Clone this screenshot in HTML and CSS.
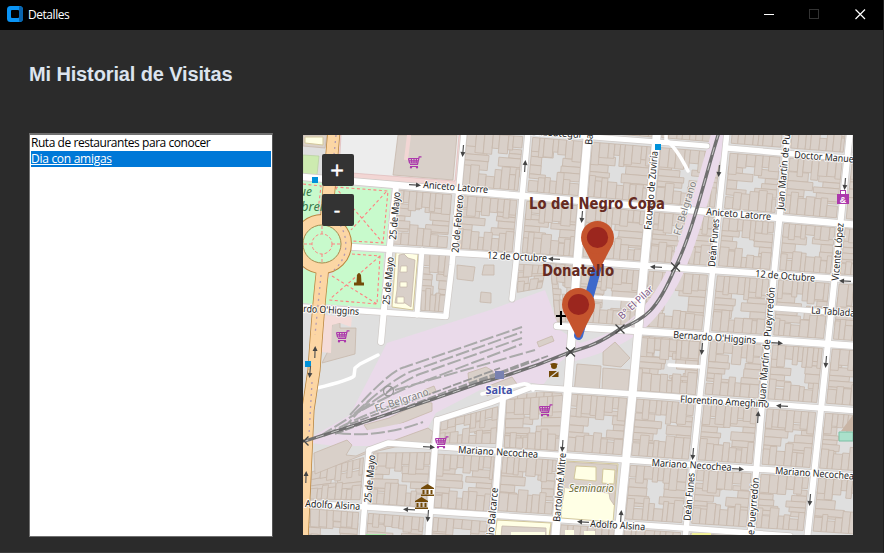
FILE: index.html
```html
<!DOCTYPE html>
<html lang="es">
<head>
<meta charset="utf-8">
<title>Detalles</title>
<link rel="stylesheet" href="styles.css">
</head>
<body>
<div class="window">
  <header class="titlebar">
    <svg class="logo" width="16" height="16" viewBox="0 0 16 16"><rect width="16" height="16" rx="3.5" fill="#0a94f5"/><path d="M12 0.2Q16 .5 16 3.500V12.500Q16 15.500 12 15.800Z" fill="#0a64ae"/><rect x="4" y="4" width="8" height="8" rx="1" fill="#000"/></svg>
    <span class="caption">Detalles</span>
    <div class="controls">
      <svg width="46" height="30"><path d="M18 14.500h10" stroke="#fff"/></svg>
      <svg width="46" height="30"><rect x="17.500" y="9.500" width="9" height="9" fill="none" stroke="#333"/></svg>
      <svg width="46" height="30"><path d="M17.500 9.500l9.500 9.500m0-9.500l-9.500 9.500" stroke="#fff" stroke-width="1.200"/></svg>
    </div>
  </header>
  <main class="content">
    <h1 class="heading">Mi Historial de Visitas</h1>
    <div class="panes">
      <ul class="list">
        <li class="item"><span class="t1">Ruta de restaurantes para conocer</span></li>
        <li class="item selected"><span class="t2">Dia con amigas</span></li>
      </ul>
      <div class="map">
        <svg width="550" height="400" viewBox="303 135 550 400">
          <defs>
            <g id="cart" fill="none" stroke="#ac39ac" stroke-width="1.200"><path d="M13.500 .8h-2.300L9.500 8.500H2M.5 2.500h10.200M.5 2.500l1 4.500h8.200M1 4.800h9.500M3.300 2.500l.5 4.500M6 2.500v4.500M8.500 2.500l-.4 4.500M2 10.500h8"/><circle cx="3" cy="11.300" r=".6"/><circle cx="9" cy="11.300" r=".6"/></g>
            <g id="arrow"><path d="M-6 0H3" stroke="#555" stroke-width="1.200"/><path d="M1-2.500L6 0L1 2.500Z" fill="#444"/></g>
            <g id="museum" fill="#734a08"><path d="M0 4L6.500 0L13 4V5H0ZM1.500 6h2v4h-2zM5.500 6h2v4h-2zM9.500 6h2v4h-2zM0 10.500h13V12H0z"/></g>
            <g id="cross" stroke="#444" stroke-width="1.300"><path d="M-4.500-4.500l9 9m0-9l-9 9"/></g>
            <g id="pin"><path d="M-15.500-26L-1.500 1H1.500L15.500-26Z" fill="#c5542d"/><circle cy="-32" r="16.500" fill="#c5542d"/><circle cy="-32" r="10.600" fill="#9b261e"/></g>
          </defs>
          <rect x="303" y="135" width="550" height="400" fill="#dfdfdf"/>
          <g id="blocks" class="lot"></g>

          <!-- shopping centre, park and avenue surroundings -->
          <path d="M335 135H464L456 190L330 177Z" fill="#ededed"/>
          <path d="M341 135l-2 37 116 9 4-46h5l-4 53-124-9 3-44z" fill="#f2d6d4" stroke="#dcb4b4" stroke-width=".6"/>
          <path class="lot" d="M398 135L393 175L453 180L457 135Z"/>
          <path d="M409 135l-3 25" stroke="#f2d6d4" stroke-width="4"/>
          <path d="M303 155l16 1-2 19-14-1z" fill="#cdebb0" stroke="#b8cfa0" stroke-width=".7"/>
          <path class="lot" d="M303 135h24l-2 13-22-2z"/><path d="M305 137h18v8l-18-2z" fill="#ffffe5" stroke="#d3c79b"/>
          <g fill="#c8facc" stroke="#ff8080" stroke-width="1.100" stroke-dasharray="3 2.500">
            <path d="M303 181l20 2-4 30-16 8z" stroke="none"/>
            <path d="M334 185l57 4-5 57-38-2-5-18-12-15z" stroke="none"/>
            <path d="M352 251l32 2-3 55-58-4 3-23z" stroke="none"/>
            <path d="M303 269l13 3-3 32-10-1z" stroke="none"/>
            <path d="M335 187l53 4-5 52-31-2M335 187l48 56M386 192l-35 38M352 254l28 2-3 48-48-4M332 276l45 28M380 256l-50 43M303 184l18 2-3 25" fill="none"/>
          </g>
          <g class="lot">
            <path d="M332 324l8-1v5h16l-1 26-33 9 7-14z"/>
            <path d="M457 265l18 2-2 14-16-2zM484 265h10v10h-12zM481 292l10 1v10l-11-1z"/>
          </g>
          <path d="M324 315l28 2-1 10-11-4-8 2-1 28-10-1z" fill="#f4dcd9"/>
          <path d="M396 252l22 2-5 56-21-3z" fill="#ffffe5" stroke="#d3c79b"/>
          <path class="lot" d="M399 255l5-1 4 4 7 2-4 47-6-4h-10l2-13z"/>
          <path d="M401 266h6v6h-7zM400 282h7v5h-7zM397 297h7v6h-7z" fill="#ffffe5" stroke="#c0b0a3" stroke-width=".6"/>

          <!-- railway land -->
          <path d="M387 343L490 310L545 290L560 330L583 345L560 362L543 385L526 382L480 390L436 413L428 428L400 446L335 446L303 442L350 415Z" fill="#eadaea"/>
          <path d="M720 132C700 200 690 240 676 270C650 326 620 342 566 355" fill="none" stroke="#eadaea" stroke-width="16"/>
          <path d="M480 391L526 384L560 386L566 360L572 357L567 388L500 397L437 418L433 430L428 428L436 413Z" fill="#dfdfdf"/>
          <g class="lot">
            <path d="M314 453l33-13 5 5-6 10 10 1 20-9 52-19 5 4-3 12-35 3-30 7-50 20z"/>
            <path d="M364 425l25-7 33-16 10 1v8l-40 16-24 4zM468 373l18-6 7 4v7l-24 5zM486 387l26-10 5 7-30 12zM424 390l10-4 2 5-11 5zM537 342l15-6 2 5-15 6z"/>
            <path d="M603 352l12-10 15 16-9 9-18-2zM577 364l24 2-2 28-25-2zM603 368l27 2-2 21-26-1z"/>
          </g>
          <path d="M338 438Q380 430 428 420" fill="none" stroke="#eadaea" stroke-width="4"/>
          <g class="yards">
            <path d="M350 415Q390 370 405 367L522 327M354 414Q395 376 415 370L522 332M358 412Q400 382 420 374L522 338M362 410Q405 387 430 379L522 344M395 390L535 350"/>
            <path d="M320 436L370 405M324 436Q360 415 400 403M337 433Q380 438 423 422M342 430Q360 410 370 400"/>
          </g>
          <g class="tracks"><path d="M345 430Q400 408 440 396L548 356M335 434L440 394L530 361M350 424L430 394L500 368"/></g>

          <!-- streets -->
          <g id="casing" class="casing"></g>
          <g id="streets" class="streets"></g>
          <g class="minor"><path d="M317 388Q350 380 354 376L355 368L360 364L378 355M666 135v5q10 7 22 31M482 394L523 384Q529 383 533 390M669 365l33 2M593 297l44 3M502 400v-12"/></g>

          <!-- avenue and roundabout -->
          <path d="M334 130L328 200L322 275Q318 310 314 370L308 410L302 540" fill="none" stroke="#b8843c" stroke-width="13"/>
          <circle cx="322" cy="244" r="24" fill="none" stroke="#b8843c" stroke-width="12"/>
          <path d="M334 130L328 200L322 275Q318 310 314 370L308 410L302 540" fill="none" stroke="#fcd6a4" stroke-width="11.500"/>
          <circle cx="322" cy="244" r="24" fill="#c8facc" stroke="#fcd6a4" stroke-width="10"/>
          <circle cx="322" cy="244" r="19" fill="#c8facc" stroke="#a98a4c"/>
          <g fill="none" stroke="#ff8080" stroke-dasharray="3 2"><circle cx="322" cy="244" r="10"/><path d="M322 226v8m0 20v8m-18-18h8m20 0h8"/></g>
          <path d="M336 135l-2 20M321 275L315 335M312 382L309 435M340 225q8 12 5 28-3 10-11 17" fill="none" stroke="#b39ab0" stroke-width="1.300" stroke-dasharray="2 4"/>

          <!-- railway line -->
          <path class="rail" d="M719 132C704 180 693 232 675 268C657 311 645 319 620 329C600 343 588 347 570 352Q525 371 480 383Q400 411 305 441"/>
          <path class="dash" d="M719 132C704 180 693 232 675 268C657 311 645 319 620 329C600 343 588 347 570 352Q525 371 480 383Q400 411 305 441"/>
          <use href="#cross" x="675.500" y="267"/><use href="#cross" x="620" y="329"/><use href="#cross" x="570.500" y="352"/><use href="#cross" x="304" y="441"/>

          <!-- seminary and schools -->
          <path d="M565 461l53 3-5 58-52-4z" fill="#ffffe5" stroke="#d3c79b"/>
          <path class="lot" d="M566 462l51 3-3 40-4-6-1-6-44-4-3 15z"/>
          <path d="M565 488l42 6 1 9 5 1-1 16-49-4z" fill="#ffffe5"/>
          <path d="M576 466l20 1v14l-22-2zM603 469l12 1-1 14-12-1z" fill="#ffffe5" stroke="#d3c79b"/>
          <path d="M497 520l54 3-2 13h-54z" fill="#ffffe5" stroke="#d3c79b"/><path class="lot" d="M502 526l44 2v8h-45z"/><path d="M511 532h34v4h-34z" fill="#ffffe5"/>
          <path d="M565 530h9v6h-9zM584 531h11v5h-11z" fill="#ffffe5"/>
          <path d="M839 432h14v9h-14z" fill="#aae0cb" stroke="#7cc0a5"/><path d="M841 431l12-16v16z" fill="#c9b5a5"/>
          <path d="M366 534h20v2h-20z" fill="#a9e8a9"/><path d="M692 533h19v3h-19z" fill="#f3f29a"/>

          <!-- symbols -->
          <g>
            <use href="#cart" x="408" y="156"/><use href="#cart" x="336" y="330"/><use href="#cart" x="539" y="404"/><use href="#cart" x="435" y="436"/>
            <use href="#museum" x="421" y="484"/><use href="#museum" x="415" y="497"/>
            <path d="M357 275q2-4 4 0l.5 7.500h2.500v3h-10v-3h2.500z" fill="#734a08"/>
            <circle cx="554" cy="366" r="3" fill="#734a08"/><path d="M550.500 363.500h7v1.500h-7zM549 371h8l-8 6.500zM558.500 371.500v5.500h-7z" fill="#734a08"/>
            <path d="M561 311v14M556 316h10" stroke="#000" stroke-width="2"/>
            <path d="M495 371h9v8h-9z" fill="#7981b0"/>
            <path d="M837 194h12v10h-12z" fill="#ac39ac"/><rect x="840.500" y="190.500" width="5" height="4" fill="#fff" stroke="#ac39ac"/><text x="843" y="202.500" text-anchor="middle" fill="#fff" font-size="9" font-weight="700" font-family="Liberation Sans">&amp;</text>
            <g fill="none" stroke="#999" stroke-width="1.300"><circle cx="388.500" cy="391" r="5"/><path d="M385 395l7-8"/></g>
            <path d="M312 177h6v6h-6zM655 144h6v6h-6zM305 361h6v6h-6z" fill="#0092da"/>
          </g>
          <g id="arrows"></g>
          <g id="labels" class="labels"></g>

          <!-- visited places -->
          <path d="M597 268L578.500 335.500" stroke="#3e69cb" stroke-width="9" stroke-linecap="round"/>
          <use href="#pin" x="597.500" y="269.500"/><use href="#pin" x="578.500" y="336.500"/>
          <g class="place"><text x="529" y="209" textLength="136" lengthAdjust="spacingAndGlyphs">Lo del Negro Copa</text><text x="542" y="276" textLength="72" lengthAdjust="spacingAndGlyphs">Donatello</text></g>
        </svg>
        <div class="zoom"><button>+</button><button>-</button></div>
      </div>
    </div>
  </main>
</div>
<script src="map.js"></script>
</body>
</html>
```
FILE: styles.css
```css
* { box-sizing: border-box; }
body { margin: 0; background: #2b2b2b; overflow: hidden; }
.window { width: 884px; height: 553px; background: #2b2b2b; display: flex; flex-direction: column; border-right: 1px solid #1f1f1f; border-bottom: 1px solid #3c3c3c; }
.titlebar { height: 30px; flex: none; background: #000; display: flex; align-items: center; padding-left: 7px; color: #fff; }
.logo { margin-top: -2px; }
.caption { font: 12px "Open Sans", sans-serif; margin: -1px 0 0 5px; letter-spacing: -0.45px; }
.controls { margin-left: auto; display: flex; margin-right: -1px; }
.controls svg { display: block; }
.content { padding: 30px 30px 0 29px; }
.heading { margin: 0; height: 28px; font: bold 20px/28px "Liberation Sans", Arial, sans-serif; letter-spacing: -0.13px; color: #dce4ee; }
.panes { display: flex; gap: 30px; margin-top: 45px; }
.list { margin: 0; padding: 0 1px; width: 244px; height: 404px; list-style: none; background: #fff; border: 1px solid #707070; border-top-width: 2px; border-right-color: #555; font: 12px/16px "Open Sans", sans-serif; color: #000; }
.item { height: 16px; white-space: nowrap; }
.selected { background: #0078d7; color: #fff; text-decoration: underline; }
.t1 { letter-spacing: -0.45px; }
.t2 { letter-spacing: -0.28px; }
.map { position: relative; width: 550px; height: 400px; margin-top: 2px; overflow: hidden; }
.map > svg { display: block; }
.zoom { position: absolute; left: 19px; top: 19px; display: flex; flex-direction: column; gap: 8px; }
.zoom button { width: 32px; height: 32px; border: 0; border-radius: 2px; padding: 0 2px 0 0; background: #333; color: #fff; font: 18px/32px "DejaVu Sans", sans-serif; -webkit-text-stroke: .5px #fff; }
.lot { fill: #d9d0c9; stroke: #c6b7ab; stroke-width: .8; }
.casing { fill: none; stroke: #cfcac7; stroke-linecap: round; stroke-linejoin: round; }
.streets { fill: none; stroke: #fff; stroke-linecap: round; stroke-linejoin: round; }
.minor { fill: none; stroke: #fff; stroke-width: 3.5; stroke-linecap: round; stroke-linejoin: round; }
.rail { fill: none; stroke: #707070; stroke-width: 3.4; }
.dash { fill: none; stroke: #c8c8c8; stroke-width: 1; stroke-dasharray: 8 8; }
.yards path { fill: none; stroke: #aaa; stroke-width: 2; stroke-dasharray: 14 3; }
.tracks path { fill: none; stroke: #999; stroke-width: 1.8; stroke-dasharray: 9 2; }
.labels text { font: 10px "Noto Sans", sans-serif; fill: #1c1c1c; stroke: rgba(255,255,255,.8); stroke-width: 2.2px; paint-order: stroke; stroke-linejoin: round; }
.labels .railname { fill: #808080; stroke: rgba(255,255,255,.5); }
.labels .stop { fill: #7e5a86; }
.labels .station { fill: #4250a8; font-weight: 700; font-size: 11px; }
.labels .park { fill: #3c7a4c; font-style: italic; font-size: 12px; stroke: none; }
.labels .school { fill: #6f6f35; font-style: italic; }
.place text { font: bold 15.5px "DejaVu Sans Condensed", "DejaVu Sans", sans-serif; font-stretch: condensed; fill: #652a22; }
```
FILE: map.js
```js
const NS = "http://www.w3.org/2000/svg";
const el = (parent, name, attrs, text) => {
  const n = document.createElementNS(NS, name);
  for (const k in attrs) n.setAttribute(k, attrs[k]);
  if (text) n.textContent = text;
  document.getElementById(parent).appendChild(n);
};
let seed = 11;
const rnd = (a, b) => { seed = (seed * 16807) % 2147483647; return a + (b - a) * seed / 2147483647; };

// Street grid: rows are y = b + (x-303)*t, columns are x = a - (y-135)*s
const rows = [[50, .08], [114, .08], [177, .086], [243, .067], [308, .068], [369, .075], [438, .068], [503, .065], [572, .065]];
const cols = [[335, .085], [396, .086], [462, .09], [528, .093], [588, .082], [657, .095], [727, .104], [787, .091], [850, .106], [918, .1]];
const cross = (r, c) => {
  let y = r[0], x;
  for (let i = 0; i < 8; i++) { x = c[0] - (y - 135) * c[1]; y = r[0] + (x - 303) * r[1]; }
  return [x, y];
};

// Fill a city block with lots around an open courtyard
function block(q) {
  const W = Math.hypot(q[1][0] - q[0][0], q[1][1] - q[0][1]);
  const H = Math.hypot(q[3][0] - q[0][0], q[3][1] - q[0][1]);
  const pt = (x, y) => {
    const u = x / W, v = y / H;
    return [0, 1].map(k => ((q[0][k] * (1 - u) + q[1][k] * u) * (1 - v) + (q[3][k] * (1 - u) + q[2][k] * u) * v).toFixed(1)).join(",");
  };
  const lot = (x0, y0, x1, y1) => el("blocks", "polygon", { points: [pt(x0, y0), pt(x1, y0), pt(x1, y1), pt(x0, y1)].join(" ") });
  const m = 5, d = H * .26;
  for (const side of [0, 1]) {
    let y = m + d * .8;
    while (y < H - m - d * .8) {
      const s = Math.min(rnd(4.5, 9), H - m - d * .8 - y), len = W * rnd(.16, .42);
      if (s > 1) side ? lot(W - m - len, y, W - m, y + s) : lot(m, y, m + len, y + s);
      y += s + .01;
    }
  }
  for (const side of [0, 1]) {
    let x = m;
    while (x < W - m) {
      let s = rnd(4.5, 9.5);
      if (W - m - x - s < 3) s = W - m - x;
      const len = d * rnd(.65, 1.35);
      side ? lot(x, H - m - len, x + s, H - m) : lot(x, m, x + s, m + len);
      x += s + .01;
    }
  }
}
const cell = (r, c) => block([cross(rows[r], cols[c]), cross(rows[r], cols[c + 1]), cross(rows[r + 1], cols[c + 1]), cross(rows[r + 1], cols[c])]);
for (let r = 0; r < 8; r++) for (let c = 1; c < 9; c++) {
  if (c < 2 && r !== 2) continue;
  if (c < 3 && (r < 2 || r > 2) && !(c === 2 && r < 2)) continue;
  if (c === 3 && (r === 3 || r === 4)) continue;
  if (c === 4 && (r === 4 || r === 6)) continue;
  cell(r, c);
}
block([[417, 248], [456, 251], [447, 317], [417, 315]]);
block([[545, 258], [578, 261], [572, 327], [553, 326]]);
block([[514, 259], [552, 262], [545, 291], [513, 298]]);
block([[433, 449], [500, 452], [493, 517], [429, 512]]);
block([[369, 448], [436, 447], [430, 513], [364, 508]]);
block([[308, 468], [369, 448], [364, 508], [304, 504]]);
block([[300, 503], [364, 508], [360, 560], [300, 556]]);
block([[364, 508], [429, 513], [425, 560], [360, 556]]);
block([[429, 512], [493, 517], [488, 565], [425, 560]]);
block([[437, 418], [503, 396], [500, 453], [434, 448]]);
block([[502, 395], [568, 389], [565, 457], [499, 452]]);
block([[634, 332], [705, 337], [700, 400], [630, 395]]);

const roads = [
  ["M303 177L390 184.500L523 196L670 208.500L858 225", 6.5], ["M580 136L670 143L707 146", 5], ["M727 148L782 153L858 159", 5.5],
  ["M540 132L580 136", 5], ["M345 246.500L490 255L670 267.500L858 280", 6], ["M303 307L446 316.500", 5.5], ["M557 326L670 333L858 346", 6.5],
  ["M775 308L858 314", 5], ["M437 420L490 403L532 387L670 396.500L858 411", 5.5], ["M369 450L388 443L490 450.500L670 463L858 476", 5.5],
  ["M303 503L490 515L670 527L790 536", 5.5],
  ["M396 186L388 265L381 342", 6], ["M422 250L417 315", 5], ["M464 132L452 265L446 315", 5.5], ["M369 450L362 540", 5.5], ["M437 420L428 540", 6],
  ["M528 132L516 263L512 299", 5.5], ["M503 398L492 540", 6], ["M588 132L577 265L567 400L555 540", 8], ["M657 132L644 267L632 400L618 540", 8],
  ["M727 132L713 267L699.500 400L685 540", 5.5], ["M788 132L775 263L762 405L750 540", 6], ["M850 132L836 265L822 400L807 540", 6],
  ["M643 315L626 328", 4]
];
for (const [d, w] of roads) el("casing", "path", { d, "stroke-width": w + 1.4 });
for (const [d, w] of roads) el("streets", "path", { d, "stroke-width": w });

// x, y, direction in degrees
[[415, 185, 4], [463, 151, 95], [525, 166, -86], [582, 217, 95], [554, 259, 183], [719, 171, 95], [845, 184, 95], [656, 267, 183],
 [702, 349, 95], [777, 343, 4], [826, 362, 95], [845, 281, 183], [429, 447, 4], [409, 509.500, 183], [428, 516, 95], [562.500, 446, 94],
 [583, 522, 184], [621, 516, -86], [693, 454, 95], [758, 417, -86], [782, 406, 184], [738, 469, 4], [810, 500, 95], [306, 477, -88],
 [315, 352, -88], [310, 372, 95]
].forEach(([x, y, a]) => el("arrows", "use", { href: "#arrow", transform: `translate(${x} ${y}) rotate(${a})` }));

// text, x, y, angle, length, anchor, class
[["Aniceto Latorre", 423, 188, 4.5, 65], ["Aniceto Latorre", 706, 215, 4.5, 65], ["12 de Octubre", 487, 258.5, 3, 60],
 ["12 de Octubre", 755, 277, 4.5, 60], ["Bernardo O'Higgins", 673, 338, 4, 83], ["rdo O'Higgins", 303, 312, 3, 56],
 ["La Tablada", 811, 313.5, 4, 44], ["Doctor Manuel", 794, 158, 4.5, 62], ["Florentino Ameghino", 680, 402.5, 3.3, 89],
 ["Mariano Necochea", 458, 453, 3.5, 80], ["Mariano Necochea", 651.5, 466, 3.5, 80], ["Mariano Necochea", 775, 474, 4, 79],
 ["Adolfo Alsina", 305, 507, 3, 55], ["Adolfo Alsina", 590, 527, 3.5, 55], ["Anzoátegui", 581, 138, 4, 50, "end"],
 ["25 de Mayo", 396, 240, -85, 48], ["25 de Mayo", 389.5, 305, -85, 48], ["25 de Mayo", 371, 503, -85, 48],
 ["20 de Febrero", 458.5, 253, -85, 58], ["Bartolomé Mitre", 592, 145, -85, 69], ["Facundo de Zuviría", 651, 230, -85, 79],
 ["Bartolomé Mitre", 560, 522, -85, 69], ["Antonio Balcarce", 498, 488, -85, 74, "end"], ["Deán Funes", 715, 267, -85, 48],
 ["Deán Funes", 690.5, 521, -85, 48], ["Juan Martín de Pueyrredón", 783.5, 210, -85, 115], ["Juan Martín de Pueyrredón", 765, 402, -85, 115],
 ["Juan Martín de Pueyrredón", 759, 478, -85, 115, "end"], ["Vicente López", 838.5, 281, -85, 58],
 ["FC Belgrano", 680, 236, -73, 56, "start", "railname"], ["FC Belgrano", 376, 412, -18, 56, "start", "railname"],
 ["B° El Pilar", 622, 320, -43, 44, "start", "stop"], ["Salta", 485.5, 393.5, 0, 27, "start", "station"],
 ["Seminario", 569, 492, 0, 45, "start", "school"], ["ue", 312, 196, 0, 13, "end", "park"], ["brero", 301, 211, 0, 31, "start", "park"]
].forEach(([t, x, y, a, len, anchor, cls]) => el("labels", "text", {
  transform: `translate(${x} ${y}) rotate(${a})`, textLength: len, lengthAdjust: "spacingAndGlyphs", "text-anchor": anchor || "start", class: cls || "street"
}, t));
```
